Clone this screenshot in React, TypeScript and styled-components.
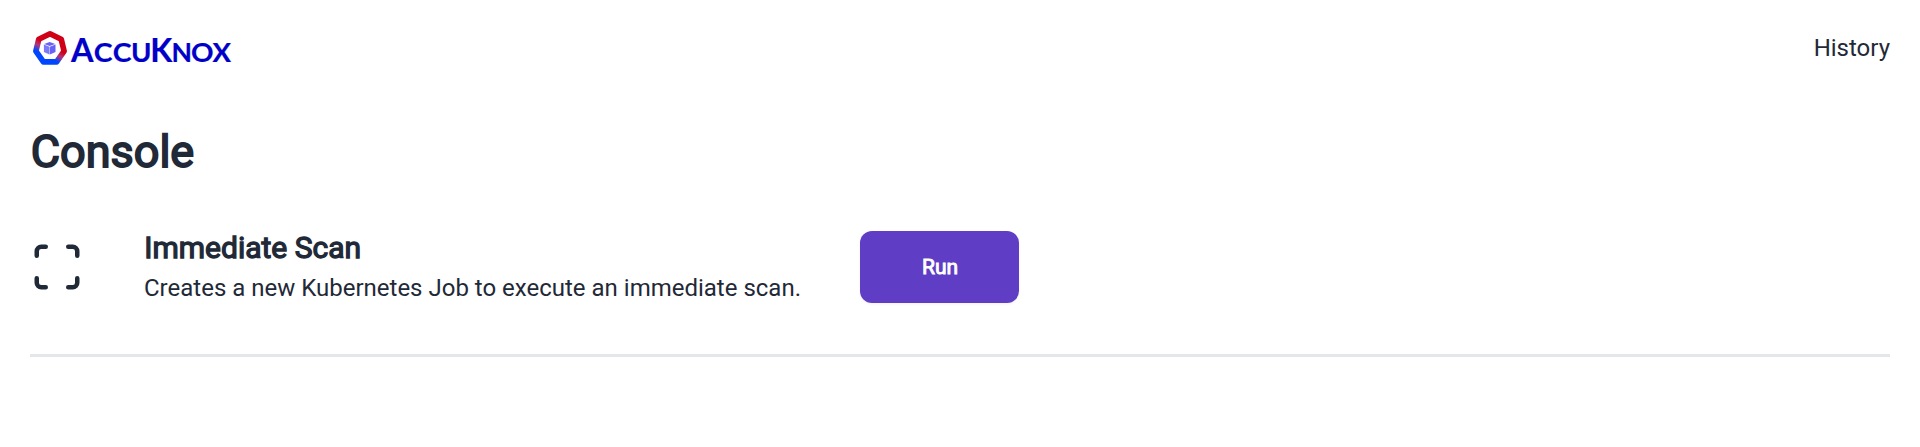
import React from 'react';
import styled, { createGlobalStyle } from 'styled-components';

const GlobalStyle = createGlobalStyle`
  body { margin: 0; background: #fff; color: #1f2937; font-family: Roboto, sans-serif; font-size: 24px; line-height: 36px; }
  * { box-sizing: border-box; }
`;

const Page = styled.main`
  padding: 0 30px;
`;
const Header = styled.header`
  height: 96px;
  display: flex;
  align-items: center;
  justify-content: space-between;
`;
const Brand = styled.svg`
  display: block;
  width: 204px;
  height: 40px;
  font-family: Lato, sans-serif;
  font-weight: 700;
  fill: #0000c8;
`;
const NavLink = styled.a`
  color: inherit;
  text-decoration: none;
`;
const Title = styled.h1`
  margin: 24px 0 0;
  padding-left: 0.7px;
  font-size: 45px;
  line-height: 63px;
  font-weight: 400;
  -webkit-text-stroke: 1.8px currentColor;
`;
const TaskRow = styled.section`
  margin-top: 48px;
  height: 72px;
  display: flex;
  align-items: center;
`;
const ScanIcon = styled.svg`
  width: 54px;
  height: 54px;
  flex: none;
`;
const Details = styled.div`
  margin-left: 60px;
  width: 656px;
`;
const TaskName = styled.h2`
  margin: 0;
  padding: 0 0 2px 0.3px;
  font-size: 30px;
  line-height: 40px;
  font-weight: 400;
  -webkit-text-stroke: 1.3px currentColor;
`;
const Description = styled.p`
  margin: 0;
  white-space: nowrap;
`;
const RunButton = styled.button`
  margin-left: 60px;
  padding: 0 0 1px 1px;
  width: 159px;
  height: 72px;
  border: 0;
  border-radius: 12px;
  background: #5f3dc4;
  color: #fff;
  font-family: inherit;
  font-size: 21px;
  -webkit-text-stroke: 0.9px currentColor;
  box-shadow: 0 1px 3px rgba(0, 0, 0, 0.06);
`;
const Divider = styled.hr`
  margin: 51px 0 0;
  border: 0;
  height: 3px;
  background: #e5e6eb;
`;

const letters: [string, number, number, number][] = [
  ['A', 41, 31.5, 22.5],
  ['C', 63.8, 27, 18.8],
  ['C', 82.8, 27, 18.8],
  ['U', 101, 27, 20.5],
  ['K', 120.3, 32.5, 22],
  ['N', 141.5, 26.5, 20.5],
  ['O', 161, 27, 22.5],
  ['X', 182.5, 26.5, 18.5],
];

function Logo() {
  return (
    <Brand viewBox="0 0 204 40" role="img" aria-label="AccuKnox">
      <defs>
        <linearGradient id="ring" gradientUnits="userSpaceOnUse" x1="27" y1="5" x2="11" y2="35">
          <stop offset="0.42" stopColor="#d00018" />
          <stop offset="0.57" stopColor="#b3357a" />
          <stop offset="0.74" stopColor="#0046ff" />
        </linearGradient>
      </defs>
      <path d="M20 5.8 L31.2 11.2 L34.1 23.2 L26.6 33.9 H13.4 L5.9 23.2 L8.8 11.2 Z" fill="none" stroke="url(#ring)" strokeWidth="5.7" strokeLinejoin="round" />
      <path d="M19.7 14 L25.2 15.9 L19.7 18.1 L14.2 15.9 Z" fill="#6762f5" />
      <path d="M13.9 16.6 L19.5 18.8 V26.6 L13.9 24 Z" fill="#7b78fa" />
      <path d="M25.5 16.6 L19.9 18.8 V26.6 L25.5 24 Z" fill="#6762f5" />
      {letters.map(([letter, x, size, width], index) => (
        <text key={index} x={x} y="33.6" fontSize={size} textLength={width} lengthAdjust="spacingAndGlyphs" stroke="#0000c8" strokeWidth="0.2">{letter}</text>
      ))}
    </Brand>
  );
}

export default function App() {
  return (
    <>
      <GlobalStyle />
      <Page>
        <Header>
          <Logo />
          <NavLink>History</NavLink>
        </Header>
        <Title>Console</Title>
        <TaskRow>
          <ScanIcon viewBox="0 0 24 24" fill="none" stroke="currentColor" strokeWidth="2" strokeLinecap="round" strokeLinejoin="round">
            <path d="M3 7V5a2 2 0 0 1 2-2h2M17 3h2a2 2 0 0 1 2 2v2M21 17v2a2 2 0 0 1-2 2h-2M7 21H5a2 2 0 0 1-2-2v-2" />
          </ScanIcon>
          <Details>
            <TaskName>Immediate Scan</TaskName>
            <Description>Creates a new Kubernetes Job to execute an immediate scan.</Description>
          </Details>
          <RunButton>Run</RunButton>
        </TaskRow>
        <Divider />
      </Page>
    </>
  );
}
